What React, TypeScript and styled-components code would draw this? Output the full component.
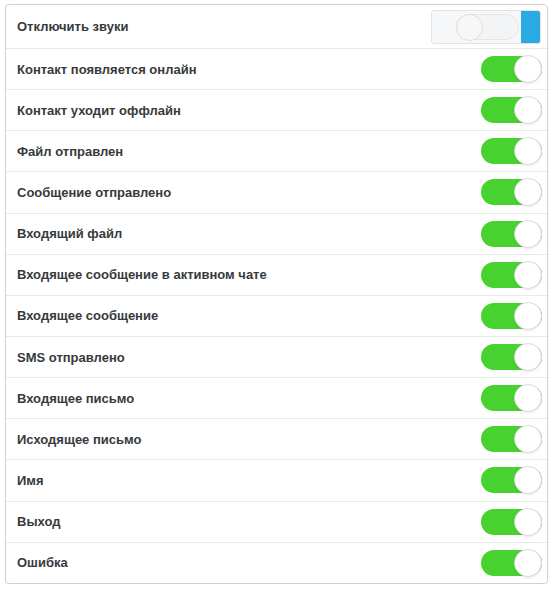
import { useState } from "react";
import styled, { createGlobalStyle } from "styled-components";

const GlobalStyle = createGlobalStyle`
  body {
    margin: 0;
    background: #fff;
    font-family: "Liberation Sans", Arial, sans-serif;
  }
`;

const Page = styled.div`
  padding: 4px 8px 0 5px;
`;

const Card = styled.div`
  border: 1px solid #cfd3d6;
  border-radius: 4px;
  background: #fff;
  box-shadow: 0 1px 2px rgba(0, 0, 0, 0.06);
  overflow: hidden;
`;

const Row = styled.div<{ first?: boolean }>`
  display: flex;
  align-items: center;
  justify-content: space-between;
  box-sizing: border-box;
  height: ${({ first }) => (first ? "43px" : "41.15px")};
  padding: 0 5px 0 11px;
  border-top: ${({ first }) => (first ? "none" : "1px solid #e6e8ea")};
`;

const Label = styled.span`
  font-size: 13px;
  font-weight: 700;
  color: #373a3c;
`;

const Track = styled.button<{ on: boolean }>`
  position: relative;
  width: 61px;
  height: 26px;
  padding: 0;
  border: none;
  border-radius: 13px;
  background: ${({ on }) => (on ? "#48d22f" : "#e9e9e9")};
  cursor: pointer;
`;

const Knob = styled.span<{ on: boolean }>`
  position: absolute;
  top: -1px;
  left: ${({ on }) => (on ? "33px" : "-1px")};
  width: 28px;
  height: 28px;
  box-sizing: border-box;
  border-radius: 50%;
  background: #fff;
  border: 1px solid #dcdcdc;
  box-shadow: 0 1px 2px rgba(0, 0, 0, 0.08);
`;

const MuteBox = styled.div`
  display: flex;
  align-items: center;
  box-sizing: border-box;
  width: 110px;
  height: 34px;
  margin-right: 1px;
  border: 1px solid #e2e2e2;
  border-radius: 3px;
  background: #f6f7f8;
  overflow: hidden;
`;

const MuteTrack = styled.div`
  position: relative;
  margin-left: 24px;
  width: 63px;
  height: 26px;
  box-sizing: border-box;
  border: 1px solid #e6e6e6;
  border-radius: 13px;
  background: #f3f4f5;
`;

const MuteKnob = styled.span`
  position: absolute;
  top: -1px;
  left: -1px;
  width: 27px;
  height: 27px;
  box-sizing: border-box;
  border-radius: 50%;
  border: 1px solid #dedede;
  background: #f7f7f7;
`;

const MuteBar = styled.div`
  margin-left: auto;
  width: 19px;
  height: 100%;
  background: #2aa9e3;
`;

const items = [
  "Контакт появляется онлайн",
  "Контакт уходит оффлайн",
  "Файл отправлен",
  "Сообщение отправлено",
  "Входящий файл",
  "Входящее сообщение в активном чате",
  "Входящее сообщение",
  "SMS отправлено",
  "Входящее письмо",
  "Исходящее письмо",
  "Имя",
  "Выход",
  "Ошибка",
];

export default function App() {
  const [state, setState] = useState<boolean[]>(items.map(() => true));

  const flip = (i: number) =>
    setState((s) => s.map((v, j) => (j === i ? !v : v)));

  return (
    <Page>
      <GlobalStyle />
      <Card>
        <Row first>
          <Label>Отключить звуки</Label>
          <MuteBox>
            <MuteTrack>
              <MuteKnob />
            </MuteTrack>
            <MuteBar />
          </MuteBox>
        </Row>
        {items.map((name, i) => (
          <Row key={name}>
            <Label>{name}</Label>
            <Track on={state[i]} onClick={() => flip(i)}>
              <Knob on={state[i]} />
            </Track>
          </Row>
        ))}
      </Card>
    </Page>
  );
}
